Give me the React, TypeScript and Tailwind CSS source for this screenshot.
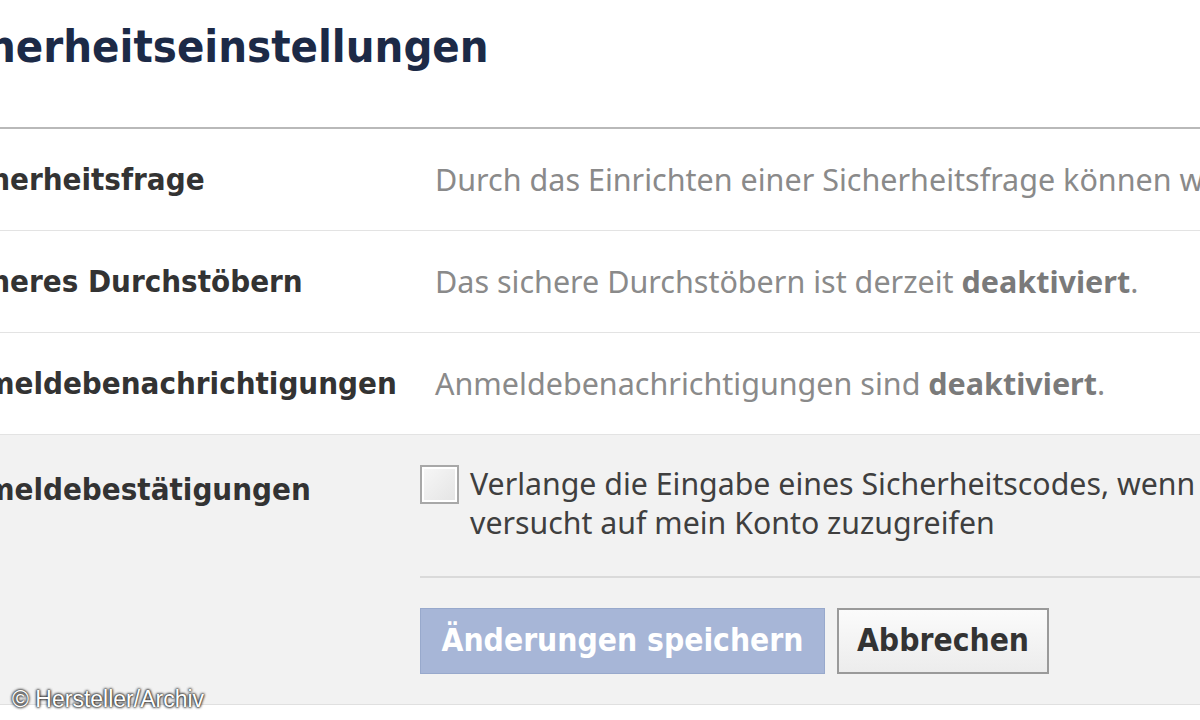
import React from 'react';

const labelFont = { fontFamily: '"DejaVu Sans Condensed", "DejaVu Sans", sans-serif' };

const rows = [
  {
    label: 'Sicherheitsfrage',
    text: <>Durch das Einrichten einer Sicherheitsfrage können wir dich identifizieren</>,
  },
  {
    label: 'Sicheres Durchstöbern',
    text: (
      <>
        Das sichere Durchstöbern ist derzeit <b className="font-bold text-[#7a7a7a]">deaktiviert</b>.
      </>
    ),
  },
  {
    label: 'Anmeldebenachrichtigungen',
    text: (
      <>
        Anmeldebenachrichtigungen sind <b className="font-bold text-[#7a7a7a]">deaktiviert</b>.
      </>
    ),
  },
];

export default function App() {
  return (
    <div className="relative w-[1200px] h-[720px] overflow-hidden bg-white font-['Noto_Sans',sans-serif]">
      <div className="h-[129px] border-b-2 border-[#b9b9b9] pt-[19px]">
        <h1
          className="-ml-[80px] whitespace-nowrap text-[45px] font-bold leading-[56px] text-[#1c2a47]"
          style={labelFont}
        >
          Sicherheitseinstellungen
        </h1>
      </div>

      {rows.map((row) => (
        <div key={row.label} className="flex h-[102px] items-center border-b border-[#e3e3e3]">
          <div
            className="w-[476px] shrink-0 -ml-[56px] whitespace-nowrap text-[31px] font-bold text-[#333333]"
            style={labelFont}
          >
            {row.label}
          </div>
          <div className="whitespace-nowrap pl-[15px] text-[30.5px] text-[#8a8a8a]">{row.text}</div>
        </div>
      ))}

      <div className="flex h-[270px] bg-[#f2f2f2] border-b border-[#e0e0e0]">
        <div
          className="w-[476px] shrink-0 -ml-[56px] pt-[31px] whitespace-nowrap text-[31px] font-bold text-[#333333]"
          style={labelFont}
        >
          Anmeldebestätigungen
        </div>
        <div className="flex-1 pt-[29px]">
          <div className="flex items-start gap-[11px]">
            <div className="mt-[1px] h-[39px] w-[39px] shrink-0 border-2 border-[#a8a8a8] bg-gradient-to-br from-[#f7f7f7] to-[#e4e4e4] shadow-[inset_0_0_0_2px_#ffffff]" />
            <p className="whitespace-nowrap text-[30.3px] leading-[39px] text-[#3f3f3f]">
              Verlange die Eingabe eines Sicherheitscodes, wenn ein unbekanntes Gerät
              <br />
              versucht auf mein Konto zuzugreifen
            </p>
          </div>
          <div className="mt-[34px] h-[2px] bg-[#dadada]" />
          <div className="mt-[30px] flex gap-[12px]">
            <button
              className="h-[66px] w-[405px] border border-[#98a9cc] bg-[#a7b6d7] text-[31.5px] font-bold text-white"
              style={labelFont}
            >
              Änderungen speichern
            </button>
            <button
              className="h-[66px] w-[212px] border-2 border-[#9a9a9a] bg-gradient-to-b from-[#fbfbfb] to-[#ececec] text-[31.5px] font-bold text-[#333333]"
              style={labelFont}
            >
              Abbrechen
            </button>
          </div>
        </div>
      </div>

      <div className="absolute left-[12px] top-[682px] font-['Liberation_Sans',sans-serif] text-[23px] text-white [text-shadow:0_0_3px_#333,0_0_3px_#333,0_0_2px_#000]">
        © Hersteller/Archiv
      </div>
    </div>
  );
}
